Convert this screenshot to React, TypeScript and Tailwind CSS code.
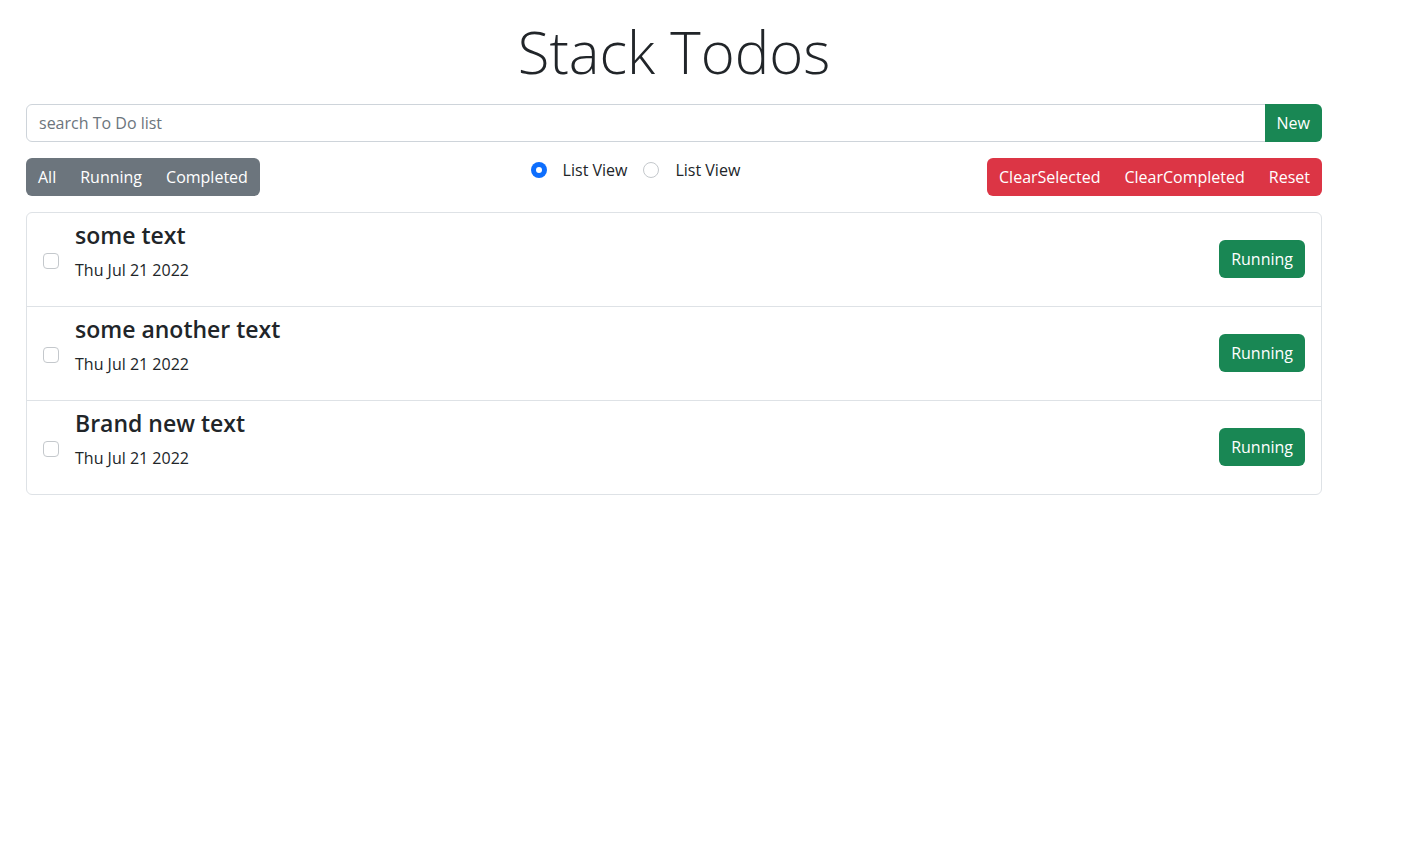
import React, { useState } from "react";

// Stack Todos: search bar, filter + view toggles, todo list card.

const todos = [
  { id: 1, title: "some text", date: "Thu Jul 21 2022" },
  { id: 2, title: "some another text", date: "Thu Jul 21 2022" },
  { id: 3, title: "Brand new text", date: "Thu Jul 21 2022" },
];

export default function App() {
  const [view, setView] = useState(0);

  return (
    <div
      className="min-h-screen bg-white text-[#212529] text-base"
      style={{ fontFamily: '"Open Sans", "Noto Sans", sans-serif' }}
    >
      <div className="ml-[26px] w-[1296px]">
        {/* Title */}
        <h1 className="text-center text-[58px] font-light leading-[72px] pt-[16px] mb-[16px]">
          Stack Todos
        </h1>

        {/* Search */}
        <div className="flex">
          <input
            className="flex-1 h-[38px] border border-[#ced4da] rounded-l-[6px] px-3 text-base placeholder:text-[#6c757d] outline-none"
            placeholder="search To Do list"
          />
          <button className="h-[38px] px-3 bg-[#198754] text-white rounded-r-[6px] -ml-px">
            New
          </button>
        </div>

        {/* Filters */}
        <div className="flex items-start justify-between mt-4">
          <div className="flex h-[38px] rounded-[6px] overflow-hidden bg-[#6c757d] text-white">
            <button className="px-3">All</button>
            <button className="px-3">Running</button>
            <button className="px-3">Completed</button>
          </div>

          <div className="flex items-center h-6 gap-4 ml-[24px]">
            {["List View", "List View"].map((label, i) => (
              <label key={i} className="flex items-center gap-4 cursor-pointer">
                <span
                  onClick={() => setView(i)}
                  className={`w-4 h-4 rounded-full ${
                    view === i
                      ? "bg-[#0d6efd] flex items-center justify-center"
                      : "border border-[#c4c8cc] bg-white"
                  }`}
                >
                  {view === i && <span className="w-[6px] h-[6px] rounded-full bg-white" />}
                </span>
                <span>{label}</span>
              </label>
            ))}
          </div>

          <div className="flex h-[38px] rounded-[6px] overflow-hidden bg-[#dc3545] text-white">
            <button className="px-3">ClearSelected</button>
            <button className="px-3">ClearCompleted</button>
            <button className="px-3">Reset</button>
          </div>
        </div>

        {/* Todo list */}
        <div className="mt-4 border border-[#dee2e6] rounded-[6px]">
          {todos.map((t, i) => (
            <div
              key={t.id}
              className={`flex items-center justify-between px-4 py-2 ${
                i > 0 ? "border-t border-[#dee2e6]" : ""
              }`}
            >
              <div className="flex items-center gap-4">
                <span className="w-4 h-4 mt-[3px] rounded-[4px] border border-[#c4c8cc] bg-white" />
                <div>
                  <h4 className="text-[23px] font-semibold leading-[29px] mb-2">{t.title}</h4>
                  <p className="leading-6 mb-4">{t.date}</p>
                </div>
              </div>
              <button className="h-[38px] px-3 bg-[#198754] text-white rounded-[6px] -mt-px">
                Running
              </button>
            </div>
          ))}
        </div>
      </div>
    </div>
  );
}
